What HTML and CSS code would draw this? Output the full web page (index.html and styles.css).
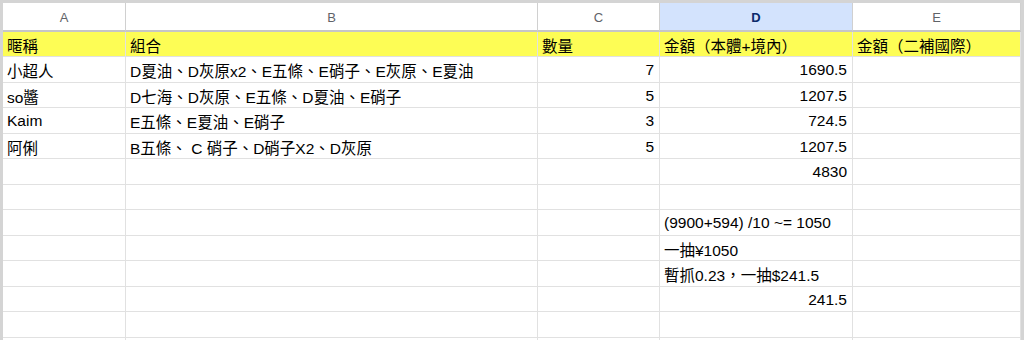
FILE: index.html
```html
<!DOCTYPE html>
<html lang="zh-Hant">
<head>
<meta charset="utf-8">
<link rel="stylesheet" href="styles.css">
</head>
<body>
<div class="sheet">
  <div class="grid">
    <div class="hd">A</div><div class="hd">B</div><div class="hd">C</div><div class="hd hd-sel">D</div><div class="hd">E</div>

    <div class="c y">暱稱</div><div class="c y">組合</div><div class="c y">數量</div><div class="c y">金額（本體+境內）</div><div class="c y">金額（二補國際）</div>

    <div class="c">小超人</div><div class="c">D夏油、D灰原x2、E五條、E硝子、E灰原、E夏油</div><div class="c r">7</div><div class="c r">1690.5</div><div class="c"></div>

    <div class="c">so醬</div><div class="c">D七海、D灰原、E五條、D夏油、E硝子</div><div class="c r">5</div><div class="c r">1207.5</div><div class="c"></div>

    <div class="c">Kaim</div><div class="c">E五條、E夏油、E硝子</div><div class="c r">3</div><div class="c r">724.5</div><div class="c"></div>

    <div class="c">阿俐</div><div class="c">B五條、 C 硝子、D硝子X2、D灰原</div><div class="c r">5</div><div class="c r">1207.5</div><div class="c"></div>

    <div class="c"></div><div class="c"></div><div class="c"></div><div class="c r">4830</div><div class="c"></div>

    <div class="c"></div><div class="c"></div><div class="c"></div><div class="c"></div><div class="c"></div>

    <div class="c"></div><div class="c"></div><div class="c"></div><div class="c">(9900+594) /10 ~= 1050</div><div class="c"></div>

    <div class="c"></div><div class="c"></div><div class="c"></div><div class="c">一抽¥1050</div><div class="c"></div>

    <div class="c"></div><div class="c"></div><div class="c"></div><div class="c">暫抓0.23，一抽$241.5</div><div class="c"></div>

    <div class="c"></div><div class="c"></div><div class="c"></div><div class="c r">241.5</div><div class="c"></div>

    <div class="c"></div><div class="c"></div><div class="c"></div><div class="c"></div><div class="c"></div>

    <div class="c"></div><div class="c"></div><div class="c"></div><div class="c"></div><div class="c"></div>
  </div>
</div>
</body>
</html>
```
FILE: styles.css
```css
html, body {
  margin: 0;
  padding: 0;
  background: #ffffff;
}
body {
  width: 1024px;
  height: 340px;
  overflow: hidden;
  font-family: "Liberation Sans", Arial, "Noto Sans CJK TC", sans-serif;
  color: #000;
}
.sheet {
  width: 1024px;
  height: 340px;
  box-sizing: border-box;
  border-top: 3px solid #d4d4d4;
  border-left: 3px solid #d4d4d4;
  border-right: 3px solid #d4d4d4;
  overflow: hidden;
}
.grid {
  display: grid;
  grid-template-columns: 123px 412px 122px 193px 168px;
  grid-template-rows: 29px 25px 26px 25px 26px 25px 26px 25px 26px 25px 26px 25px 26px 25px;
}
.hd {
  box-sizing: border-box;
  border-right: 1px solid #d0d0d0;
  border-bottom: 2px solid #c6c6c6;
  display: flex;
  align-items: center;
  justify-content: center;
  font-size: 13px;
  color: #5f6368;
  padding-top: 1px;
}
.hd-sel {
  background: #d3e3fd;
  color: #0b2a6b;
  font-weight: bold;
}
.c {
  box-sizing: border-box;
  border-right: 1px solid #e1e1e1;
  border-bottom: 1px solid #e1e1e1;
  display: flex;
  align-items: center;
  padding: 1px 5px 0 4px;
  font-size: 15.5px;
  white-space: nowrap;
  overflow: hidden;
}
.y {
  background: #fdfd55;
}
.r {
  justify-content: flex-end;
}
```
